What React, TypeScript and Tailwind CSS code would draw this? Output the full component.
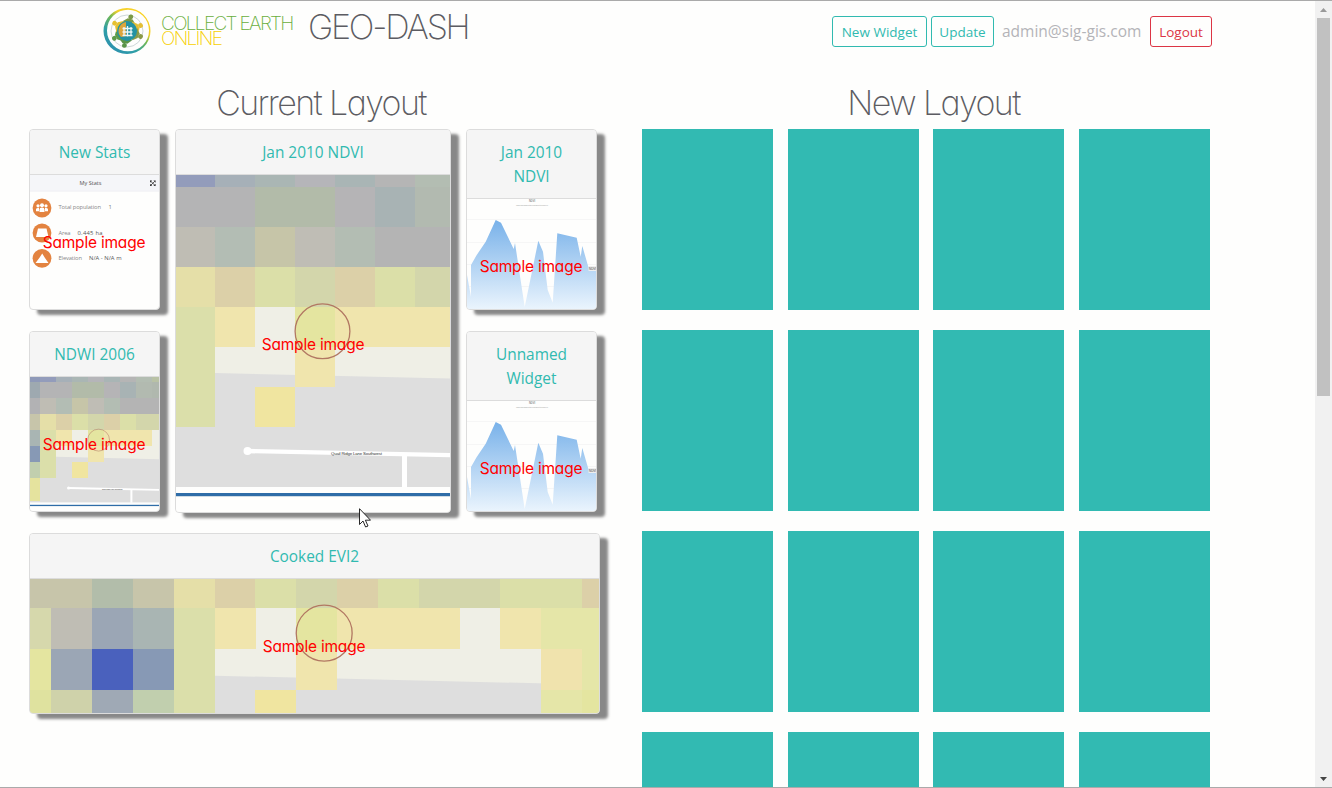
import React from "react";

const BODY = "font-['Open_Sans','Noto_Sans',sans-serif]";
const DISPLAY = "font-['Inter',sans-serif] [font-feature-settings:'cv11']";

const COLS = [15, 55, 95, 135, 175, 215, 255, 295, 335, 375, 415, 455, 495, 535, 575];

const TILES: { y: number; h?: number; colors: string[] }[] = [
  { y: 147, colors: ["", "", "", "#8e99b8", "#939cbb", "#a6b0b8", "#aab6b4", "#b5b5b9", "#a9b5b5", "#b5b5b5", "#b3bdb2", "#b9c2a5"] },
  { y: 187, colors: ["", "", "", "#9ea9b0", "#b4b4b5", "#b4b4b5", "#b2bba9", "#b2bba9", "#b5b4b6", "#a8b3b4", "#b2bab0", "#b0b8ae"] },
  { y: 227, colors: ["", "", "", "#b2b2b4", "#bfbdb4", "#b3bdb4", "#c6c5a8", "#bfbdb5", "#b3bdb3", "#b4b4b4", "#b4b4b4", "#b4b4b4"] },
  { y: 267, colors: ["#c7c5aa", "#c7c5aa", "#b2bdaa", "#c7c5aa", "#e5dfa8", "#dcd0a8", "#dbdfa8", "#d3d6ab", "#dcd0a8", "#dbdfa8", "#d3d6ab", "#d3d6ab", "#dbdfa8", "#dbdfa8", "#dcd0a8"] },
  { y: 307, colors: ["#d6d8ac", "#bfbdb4", "#9ba6b5", "#a9b5b3", "#dbdfaa", "#f0e5ad", "", "#e4e5a0", "#f0e5ad", "#f0e5ad", "#f0e5ad", "", "#f0e5ad", "#e5e6a8", "#e5e6a8"] },
  { y: 347, colors: ["#e4e5a0", "#9ba6b5", "#4a61bd", "#8799b5", "#dbdfaa", "", "", "#f0e5ad", "", "", "", "", "", "#f0e3ad", "#e5e6a8"] },
  { y: 387, colors: ["#dfe29f", "#cfd2aa", "#9fa9b5", "#c1cfae", "#dbdfaa", "", "#f0e5a0", "", "", "", "", "", "", "#e5e6a8", "#e4e5a0"] },
  { y: 427, h: 57, colors: ["", "", "", "#e5e39e"] },
];

function MapImage({ viewBox, className }: { viewBox: string; className: string }) {
  return (
    <svg viewBox={viewBox} preserveAspectRatio="none" className={className} aria-hidden="true">
      <rect x="0" y="140" width="640" height="400" fill="#efefe6" />
      <path d="M0 368 L215 373 L640 383 V540 H0Z" fill="#dedede" />
      <g shapeRendering="crispEdges">
        {TILES.map((row) =>
          row.colors.map((c, i) =>
            c ? <rect key={`${row.y}-${i}`} x={COLS[i]} y={row.y} width="40.2" height={row.h ?? 40} fill={c} /> : null
          )
        )}
      </g>
      <circle cx="247.5" cy="451" r="4" fill="#fff" />
      <path d="M247 451 L480 455.7" stroke="#fff" strokeWidth="4.4" />
      <path d="M404.5 455 V488" stroke="#fff" strokeWidth="5" />
      <rect x="0" y="487" width="640" height="60" fill="#fefefd" />
      <rect x="0" y="493" width="640" height="3" fill="#2f6da8" />
      <rect x="0" y="496" width="640" height="1" fill="#cfdbe4" />
      <text x="331" y="455" fontSize="4.3" textLength="51" fill="#333" fontFamily="Liberation Sans, sans-serif">
        Quail Ridge Lane Southwest
      </text>
      <circle cx="322.5" cy="331.3" r="27.4" fill="none" stroke="#b27863" strokeWidth="1.3" />
    </svg>
  );
}

function ChartImage({ id }: { id: string }) {
  return (
    <svg viewBox="467 199 129 110" className="block h-[110px] w-[129px]" aria-hidden="true">
      <defs>
        <linearGradient id={id} gradientUnits="userSpaceOnUse" x1="0" y1="218" x2="0" y2="309">
          <stop offset="0" stopColor="#76b0e9" />
          <stop offset="1" stopColor="#eaf4fd" />
        </linearGradient>
      </defs>
      {[219, 242, 264, 286].map((y) => (
        <path key={y} d={`M467 ${y}.5H596`} stroke="#f6f6f6" />
      ))}
      <path
        fill={`url(#${id})`}
        d="M467 275 L471 297 V265 L476.7 255 L485.7 241.7 L495.7 220 L501 222.7 L513.7 249 L515 243 L524.7 307 L538.3 240.7 L543 251.7 L547.7 290 L552.7 302.7 L557.3 233.3 L576.7 237.7 L580.7 256.7 L582.3 246 L588.3 266.7 L596 268 V309 H467Z"
      />
      <text x="529" y="202" fontSize="2.6" fill="#555" fontFamily="Liberation Sans">NDVI</text>
      <text x="516" y="206" fontSize="2.3" textLength="32" fill="#aaa" fontFamily="Liberation Sans">Click and drag in the plot area to zoom in</text>
      <rect x="588.5" y="266" width="8" height="5" fill="#eee" />
      <text x="589" y="269.6" fontSize="3" fill="#444" fontFamily="Liberation Sans">NDVI</text>
    </svg>
  );
}

function StatsImage() {
  return (
    <svg viewBox="30 175 129 134" className="block h-[134px] w-[129px]" fontFamily="Open Sans, sans-serif" aria-hidden="true">
      <rect x="30" y="175" width="129" height="16" fill="#f5f6f9" />
      <path d="M30 191.2H159" stroke="#e9e9ee" strokeWidth=".6" />
      <text x="79.5" y="185.3" fontSize="5.6" textLength="22" fill="#555">My Stats</text>
      <path d="M150 180.5h2.2L150 182.7zM155.6 180.5h-2.2l2.2 2.2zM150 186v-2.2l2.2 2.2zM155.6 186v-2.2l-2.2 2.2z" fill="#333" />
      <path d="M150.5 181l4.6 4.5M155.1 181l-4.6 4.5" stroke="#444" strokeWidth=".9" />
      {[208, 233, 258.3].map((y) => (
        <circle key={y} cx="42" cy={y} r="9.4" fill="#e38340" />
      ))}
      <g fill="#fff">
        <circle cx="42" cy="205.3" r="2" />
        <circle cx="38" cy="205.8" r="1.6" />
        <circle cx="46" cy="205.8" r="1.6" />
        <path d="M39.5 212v-2.5q0-2 2.5-2t2.5 2v2.5zM36 211.2v-1.8q0-1.6 3-1.6v3.4zM48 211.2v-1.8q0-1.6-3-1.6v3.4z" />
        <path d="M38 228.5h8.5l2 8.5h-12.5z" />
        <path d="M35.5 263l4.5-6 2.2-3.5 2.8 4.5 3.5 5z" />
      </g>
      <g fontSize="5.8">
        <text x="58.5" y="209.3" textLength="42.5" fill="#888">Total population</text>
        <text x="108.5" y="209.3" fill="#777">1</text>
        <text x="58.5" y="234.5" textLength="12" fill="#888">Area</text>
        <text x="77.5" y="234.5" textLength="25" fill="#555">0.445 ha</text>
        <text x="58.5" y="260" textLength="23.5" fill="#888">Elevation</text>
        <text x="89" y="260" textLength="32.5" fill="#555">N/A - N/A m</text>
      </g>
    </svg>
  );
}

type WidgetProps = {
  title: React.ReactNode;
  className?: string;
  labelClass: string;
  children: React.ReactNode;
};

function Widget({ title, className = "", labelClass, children }: WidgetProps) {
  return (
    <section className={`flex flex-col rounded border border-[#dcdcdc] bg-[#fefefd] shadow-[8px_5px_3px_#888] ${className}`}>
      <h3 className={`rounded-t-[3px] border-b border-[#dcdcdc] bg-[#f5f5f5] pb-[9px] pt-[11px] text-center text-[15.4px] leading-6 text-[#31bab0] ${BODY}`}>
        {title}
      </h3>
      <div className="relative min-h-0 flex-1 overflow-hidden rounded-b-[3px]">
        {children}
        <span className={`absolute -translate-x-1/2 -translate-y-1/2 whitespace-nowrap text-[15.5px] leading-6 tracking-[-0.2px] text-[#ff0000] ${DISPLAY} ${labelClass}`}>
          Sample image
        </span>
      </div>
    </section>
  );
}

function Logo() {
  return (
    <svg viewBox="0 0 48 48" className="mt-[6px] h-12 w-12" aria-hidden="true">
      <defs>
        <linearGradient id="ring" x1="1" y1="0" x2="0.25" y2="1">
          <stop offset="0" stopColor="#fdd323" />
          <stop offset=".38" stopColor="#f3d02b" />
          <stop offset=".52" stopColor="#72b852" />
          <stop offset=".75" stopColor="#2f9fa7" />
          <stop offset="1" stopColor="#2d90ae" />
        </linearGradient>
      </defs>
      <path fillRule="evenodd" fill="url(#ring)" d="M24 1A23.5 23 0 1 1 24 47A23.5 23 0 1 1 24 1ZM25 2.8A21 20.7 0 1 0 25 44.2A21 20.7 0 1 0 25 2.8Z" />
      <circle cx="24" cy="24" r="16" fill="none" stroke="#b9c5c7" strokeWidth=".7" />
      {[
        [15, "#7a9a48"], [68, "#e4bf36"], [112, "#8a9a48"], [190, "#5a9448"], [240, "#5d9b4b"], [302, "#e6c030"],
      ].map(([a, c]) => (
        <g key={a} transform={`rotate(${a} 24 24)`} fill={c as string}>
          <circle cx="24" cy="9.4" r="2.4" />
          <path d="M17.5 15.5l4-4h5l4 4-3 3h-7z" />
        </g>
      ))}
      <circle cx="24" cy="24" r="10" fill="#2492a2" />
      <path d="M23 15a9 9 0 0 0-5 15l5-1z" fill="#dca53d" />
      <path d="M21 20v9M24.5 19v10.5M28 20v9M19.5 21.5h10M19.5 25h10M19.5 28.5h10" stroke="#eef7f6" strokeWidth="1.3" />
    </svg>
  );
}

function ActionButton({ children, className }: { children: string; className: string }) {
  return (
    <button className={`flex h-[31px] items-center justify-center whitespace-nowrap rounded-[3px] border pt-px text-[13.5px] ${className}`}>
      {children}
    </button>
  );
}

function Header() {
  return (
    <header className="flex h-[83px] items-start pl-[103px] pr-[103px]">
      <Logo />
      <div className={`ml-[10px] mt-[15px] w-[147px] whitespace-nowrap text-[19px] font-extralight leading-[15px] ${DISPLAY}`}>
        <div className="tracking-[-1.65px] text-[#69ae3c]">COLLECT EARTH</div>
        <div className="tracking-[-1.65px] text-[#f7cf00]">ONLINE</div>
      </div>
      <h1 className={`mt-[5px] whitespace-nowrap text-[34px] font-extralight leading-[42px] tracking-[-2.2px] text-[#5c5c62] ${DISPLAY}`}>GEO-DASH</h1>
      <div className={`ml-auto mt-[15px] flex items-center ${BODY}`}>
        <ActionButton className="w-[95px] border-[#31bab0] text-[#31bab0]">New Widget</ActionButton>
        <ActionButton className="ml-1 w-[63px] border-[#31bab0] text-[#31bab0]">Update</ActionButton>
        <span className="ml-2 w-[140px] whitespace-nowrap text-[15.5px] text-[#b4b4b8]">admin@sig-gis.com</span>
        <ActionButton className="ml-2 w-[62px] border-[#dc3545] text-[#dc3545]">Logout</ActionButton>
      </div>
    </header>
  );
}

function Scrollbar() {
  return (
    <div className="flex w-[17px] flex-col items-center justify-between bg-[#f1f1f1]">
      <div className="flex flex-col items-center">
        <svg viewBox="0 0 17 17" className="h-[17px] w-[17px]"><path d="M5 11h7L8.5 7z" fill="#999" /></svg>
        <div className="h-[378px] w-[13px] bg-[#c1c1c1]" />
      </div>
      <svg viewBox="0 0 17 17" className="h-[17px] w-[17px]"><path d="M5 7h7l-3.5 4z" fill="#444" /></svg>
    </div>
  );
}

function Heading({ children }: { children: string }) {
  return (
    <h2 className={`-mt-[2px] mb-[6px] pr-[14px] text-center text-[34px] font-extralight leading-[41px] tracking-[-1.6px] text-[#5c5c62] ${DISPLAY}`}>
      {children}
    </h2>
  );
}

export default function App() {
  return (
    <div className="relative flex h-[788px] w-[1332px] overflow-hidden border-y border-[#aaa] bg-[#fefefd]">
      <div className="min-w-0 flex-1">
        <Header />
        <main className="flex pl-[15px]">
          <div className="w-[612px] pl-[14px]">
            <Heading>Current Layout</Heading>
            <div className="grid grid-cols-[131px_276px_131px] grid-rows-[181px_181px_181px] gap-x-[15px] gap-y-[21px]">
              <Widget title="New Stats" labelClass="left-[64px] top-[68px]">
                <StatsImage />
              </Widget>
              <Widget title="Jan 2010 NDVI" className="row-span-2 h-[384px]" labelClass="left-[137px] top-[170px]">
                <MapImage viewBox="176 175 274 337" className="block h-[337px] w-[274px]" />
              </Widget>
              <Widget title={<>Jan 2010<br />NDVI</>} labelClass="left-[64px] top-[68px]">
                <ChartImage id="area-a" />
              </Widget>
              <Widget title="NDWI 2006" labelClass="left-[64px] top-[68px]">
                <MapImage viewBox="151 173.5 322.5 335" className="block h-[134px] w-[129px]" />
              </Widget>
              <Widget title={<>Unnamed<br />Widget</>} labelClass="left-[64px] top-[68px]">
                <ChartImage id="area-b" />
              </Widget>
              <Widget title="Cooked EVI2" className="col-span-3 w-[571px]" labelClass="left-[284px] top-[68px]">
                <MapImage viewBox="34.1 278.2 557.8 131.4" className="block h-[134px] w-[569px]" />
              </Widget>
            </div>
          </div>
          <div className="w-[612px] pl-[15px]">
            <Heading>New Layout</Heading>
            <div className="grid grid-cols-[131px_131px_131px_131px] gap-x-[14.67px] gap-y-5">
              {Array.from({ length: 16 }, (_, i) => (
                <div key={i} className="h-[181px] bg-[#32bab2]" />
              ))}
            </div>
          </div>
        </main>
      </div>
      <Scrollbar />
      <svg viewBox="0 0 12 20" className="absolute left-[359px] top-[507px] h-5 w-3" aria-hidden="true">
        <path d="M.5.7V16.5L4 13l2.6 6 2.4-1-2.6-5.800H11.5z" fill="#fff" stroke="#111" strokeWidth=".9" />
      </svg>
    </div>
  );
}
